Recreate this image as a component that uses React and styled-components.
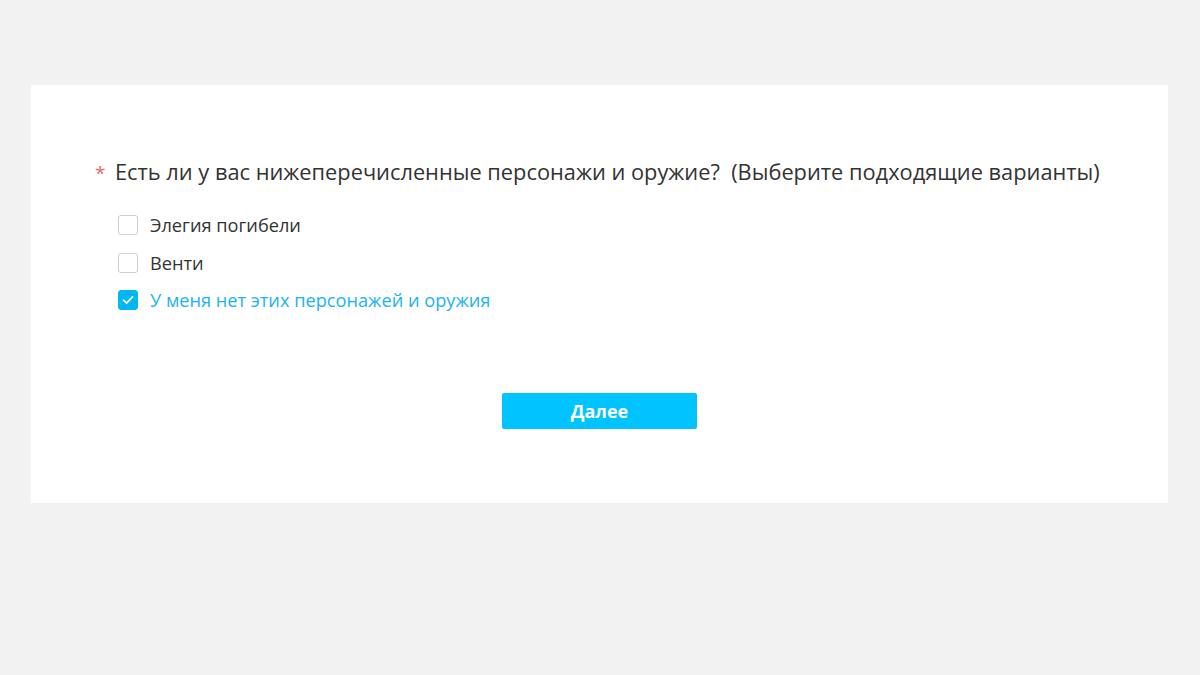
import React, { useState } from "react";
import styled, { createGlobalStyle } from "styled-components";

const Global = createGlobalStyle`
  html, body { margin: 0; padding: 0; background: #f2f2f2; }
  body { font-family: "Open Sans", "Noto Sans", sans-serif; }
`;

const Page = styled.div`
  padding: 85px 32px 0 31px;
`;

const Card = styled.div`
  background: #ffffff;
  width: 1137px;
  height: 418px;
  box-sizing: border-box;
  padding: 72px 0 0 64px;
  display: flex;
  flex-direction: column;
`;

const Title = styled.div`
  display: flex;
  align-items: baseline;
  font-size: 21.8px;
  color: #333333;
  line-height: 30px;
`;

const Star = styled.span`
  color: #e86a6a;
  font-size: 19px;
  width: 20px;
`;

const Options = styled.div`
  display: flex;
  flex-direction: column;
  gap: 13.5px;
  margin: 25px 0 0 23px;
`;

const Row = styled.label`
  display: flex;
  align-items: center;
  gap: 12px;
  font-size: 18.2px;
  line-height: 24px;
  color: ${(p) => (p.checked ? "#1ab4ef" : "#333333")};
  cursor: pointer;
`;

const Box = styled.span`
  width: 20px;
  height: 20px;
  box-sizing: border-box;
  border-radius: 3px;
  border: 1px solid ${(p) => (p.checked ? "#00b7f4" : "#d0d0d0")};
  background: ${(p) => (p.checked ? "#00b7f4" : "#fff")};
  display: flex;
  align-items: center;
  justify-content: center;
`;

const Footer = styled.div`
  display: flex;
  justify-content: center;
  margin: 81px 0 0 -64px;
`;

const Button = styled.button`
  width: 195px;
  height: 36px;
  border: none;
  border-radius: 2px;
  background: #00c3ff;
  color: #ffffff;
  font-family: "Open Sans", "Noto Sans", sans-serif;
  font-weight: 700;
  font-size: 18px;
  cursor: pointer;
`;

const options = [
  "Элегия погибели",
  "Венти",
  "У меня нет этих персонажей и оружия",
];

export default function App() {
  const [sel, setSel] = useState([2]);
  const toggle = (i) =>
    setSel((s) => (s.includes(i) ? s.filter((x) => x !== i) : [...s, i]));
  return (
    <>
      <Global />
      <Page>
        <Card>
          <Title>
            <Star>*</Star>
            <span>
              Есть ли у вас нижеперечисленные персонажи и оружие?&nbsp;&nbsp;(Выберите подходящие варианты)
            </span>
          </Title>
          <Options>
            {options.map((o, i) => {
              const c = sel.includes(i);
              return (
                <Row key={o} checked={c} onClick={() => toggle(i)}>
                  <Box checked={c}>
                    {c && (
                      <svg width="14" height="14" viewBox="0 0 14 14">
                        <path
                          d="M2.5 7.2 L5.6 10.2 L11.5 3.8"
                          fill="none"
                          stroke="#fff"
                          strokeWidth="1.8"
                          strokeLinecap="round"
                          strokeLinejoin="round"
                        />
                      </svg>
                    )}
                  </Box>
                  <span>{o}</span>
                </Row>
              );
            })}
          </Options>
          <Footer>
            <Button>Далее</Button>
          </Footer>
        </Card>
      </Page>
    </>
  );
}
